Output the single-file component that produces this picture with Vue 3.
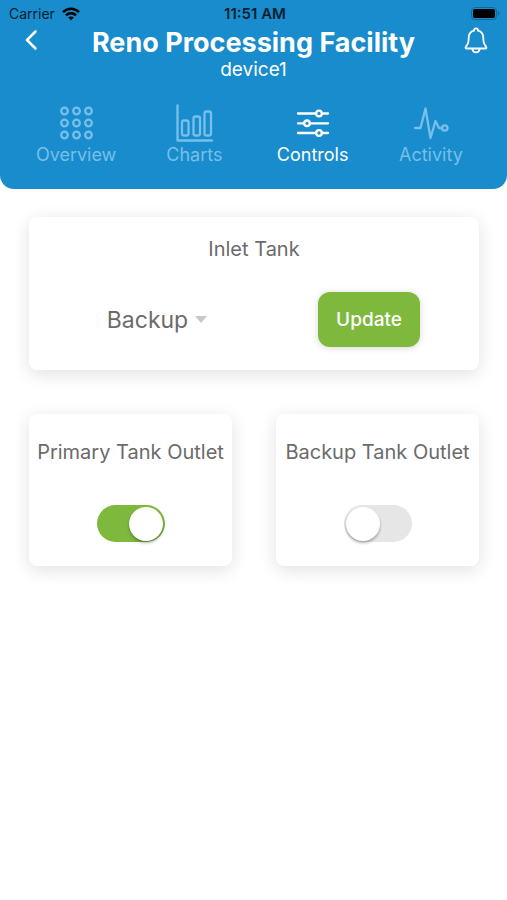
<script setup>
import { ref } from 'vue'

const tabs = [
  { id: 'overview', label: 'Overview' },
  { id: 'charts', label: 'Charts' },
  { id: 'controls', label: 'Controls' },
  { id: 'activity', label: 'Activity' },
]
const activeTab = ref('controls')

const sources = ['Primary', 'Backup']
const inlet = ref('Backup')

const outlets = ref([
  { id: 'primary-outlet', label: 'Primary Tank Outlet', open: true },
  { id: 'backup-outlet', label: 'Backup Tank Outlet', open: false },
])

const dots = [4, 16, 28]
</script>

<template>
  <div class="app">
    <header class="header">
      <div class="status">
        <span class="carrier">
          Carrier
          <svg class="wifi" viewBox="0 0 18 14" aria-hidden="true">
            <g fill="none" stroke="#000" stroke-width="2.5">
              <path d="M1 5.2C5.6 .6 12.400 .6 17 5.200" />
              <path d="M4 8.400C6.800 5.600 11.200 5.600 14 8.400" />
            </g>
            <path d="M9 13.300L6.200 10.500C7.800 9 10.200 9 11.800 10.500Z" />
          </svg>
        </span>
        <span class="clock">11:51 AM</span>
        <span class="power">
          <svg class="battery" viewBox="0 0 30 13" aria-hidden="true">
            <rect x="0.500" y="0.500" width="25" height="12" rx="3.500" fill="none" stroke="#0f6a9c" />
            <rect x="2" y="2" width="22" height="9" rx="2" />
            <path d="M27 4.500C29 5.200 29 7.800 27 8.500Z" fill="#0f6a9c" />
          </svg>
        </span>
      </div>

      <div class="titlebar">
        <button class="icon-button" type="button" aria-label="Back">
          <svg class="back" viewBox="0 0 12 20" aria-hidden="true">
            <path d="M10.500 1.500L2 10L10.500 18.500" />
          </svg>
        </button>
        <div class="titles">
          <h1>Reno Processing Facility</h1>
          <p>device1</p>
        </div>
        <button class="icon-button" type="button" aria-label="Notifications">
          <svg class="bell" viewBox="0 0 24 28" aria-hidden="true">
            <path d="M10 3.600C10 .5 14 .5 14 3.600C17.600 4.500 19.300 7.300 19.300 11C19.300 16 20 17.500 22 19.500C22.900 20.500 22.400 21.500 21.200 21.500H2.800C1.600 21.500 1.100 20.500 2 19.500C4 17.500 4.700 16 4.700 11C4.700 7.300 6.400 4.500 10 3.600Z" />
            <path d="M8.500 22C8.800 26.500 15.200 26.500 15.500 22" />
          </svg>
        </button>
      </div>

      <nav class="tabs">
        <button
          v-for="tab in tabs"
          :key="tab.id"
          type="button"
          class="tab"
          :class="{ active: tab.id === activeTab }"
          @click="activeTab = tab.id"
        >
          <svg v-if="tab.id === 'overview'" class="tab-icon" viewBox="-3 -3 38 38" aria-hidden="true">
            <template v-for="y in dots" :key="y">
              <circle v-for="x in dots" :key="x" :cx="x + 0.500" :cy="y" r="3.300" />
            </template>
          </svg>
          <svg v-else-if="tab.id === 'charts'" class="tab-icon" viewBox="0 0 38 38" aria-hidden="true">
            <path d="M2.500 1.500V36.500H37" />
            <rect x="7" y="16.500" width="6.500" height="15" rx="2" />
            <rect x="18.500" y="12.500" width="6.500" height="19" rx="2" />
            <rect x="29.500" y="7.500" width="6.500" height="24" rx="2" />
          </svg>
          <svg v-else-if="tab.id === 'controls'" class="tab-icon" viewBox="0 0 38 38" aria-hidden="true">
            <path d="M4 9.500H21.700M28.300 9.500H34M4 19.300H9.700M16.300 19.300H34M4 29H21.700M28.300 29H34" />
            <circle cx="25" cy="9.500" r="2.800" />
            <circle cx="13" cy="19.300" r="2.800" />
            <circle cx="25" cy="29" r="2.800" />
          </svg>
          <svg v-else class="tab-icon" viewBox="0 0 38 38" aria-hidden="true">
            <path d="M3 24H8.500L13.500 4.500L18.500 34L23.500 17L27 24H30" />
            <circle cx="32.800" cy="24" r="2.700" />
          </svg>
          <span>{{ tab.label }}</span>
        </button>
      </nav>
    </header>

    <main class="content">
      <form class="card inlet" @submit.prevent>
        <label class="card-title" for="inlet-source">Inlet Tank</label>
        <div class="inlet-row">
          <div class="picker">
            <select id="inlet-source" v-model="inlet">
              <option v-for="source in sources" :key="source">{{ source }}</option>
            </select>
            <svg class="caret" viewBox="0 0 12 7" aria-hidden="true">
              <path d="M0 0H12L6 7Z" />
            </svg>
          </div>
          <div class="action">
            <button class="update" type="submit">Update</button>
          </div>
        </div>
      </form>

      <div class="outlets">
        <section v-for="outlet in outlets" :key="outlet.id" class="card outlet">
          <label class="card-title" :for="outlet.id">{{ outlet.label }}</label>
          <input :id="outlet.id" v-model="outlet.open" class="switch" type="checkbox" role="switch" />
        </section>
      </div>
    </main>
  </div>
</template>

<style>
body {
  background: #fff;
}
</style>

<style scoped>
.app {
  font-family: Inter, "Liberation Sans", sans-serif;
  color: #6b6b6b;
}

button,
select {
  font: inherit;
  color: inherit;
  border: 0;
  padding: 0;
  background: none;
  cursor: pointer;
}

.header {
  background: #188ccc;
  border-radius: 0 0 14px 14px;
  padding-bottom: 23px;
}

.status {
  display: grid;
  grid-template-columns: 1fr auto 1fr;
  align-items: center;
  height: 27px;
  padding: 0 6px 0 9px;
  font-size: 14px;
  color: #06202f;
}

.carrier {
  display: flex;
  align-items: center;
  gap: 7px;
}

.wifi {
  width: 18px;
  height: 14px;
}

.clock {
  font-size: 15px;
  font-weight: 600;
}

.power {
  display: flex;
  justify-content: flex-end;
}

.battery {
  width: 30px;
  height: 13px;
}

.titlebar {
  display: flex;
  justify-content: space-between;
  align-items: flex-start;
  padding: 0 15px;
  color: #fff;
}

.icon-button {
  display: flex;
  justify-content: center;
  width: 32px;
  height: 28px;
}

.back {
  width: 12px;
  height: 20px;
  margin-top: 3px;
  fill: none;
  stroke: #fff;
  stroke-width: 2.5;
  stroke-linecap: round;
  stroke-linejoin: round;
}

.bell {
  width: 24px;
  height: 28px;
  fill: none;
  stroke: #fff;
  stroke-width: 1.8;
}

.titles {
  text-align: center;
}

h1 {
  margin: 0;
  font-size: 27px;
  font-weight: 700;
  line-height: 32px;
}

p {
  margin: 0;
  font-size: 19px;
  line-height: 22px;
}

.tabs {
  display: grid;
  grid-template-columns: repeat(4, 1fr);
  padding: 23px 17px 0;
}

.tab {
  display: flex;
  flex-direction: column;
  align-items: center;
  gap: 2px;
  font-size: 18px;
  line-height: 22px;
  color: #78bfe9;
}

.tab.active {
  color: #fff;
}

.tab-icon {
  width: 38px;
  height: 38px;
  fill: none;
  stroke: currentColor;
  stroke-width: 2.3;
  stroke-linecap: round;
  stroke-linejoin: round;
}

.content {
  display: flex;
  flex-direction: column;
  gap: 44px;
  padding: 28px 28px 28px 29px;
}

.card {
  display: flex;
  flex-direction: column;
  align-items: center;
  border-radius: 8px;
  background: #fff;
  box-shadow: 0 4px 18px rgba(0, 0, 0, 0.12);
}

.card-title {
  font-size: 20px;
  line-height: 24px;
  white-space: nowrap;
}

.inlet {
  padding: 20px 0 23px;
  gap: 31px;
}

.inlet-row {
  display: grid;
  grid-template-columns: 1fr 1fr;
  align-items: center;
  align-self: stretch;
  padding: 0 4px 0 22px;
}

.picker {
  display: flex;
  align-items: center;
  justify-content: center;
}

select {
  appearance: none;
  field-sizing: content;
  font-size: 23px;
  line-height: 28px;
  padding-right: 19px;
}

.caret {
  width: 12px;
  height: 7px;
  margin-left: -12px;
  fill: #c8c8c8;
  pointer-events: none;
}

.action {
  display: flex;
  justify-content: center;
}

.update {
  padding: 0 18px;
  height: 55px;
  border-radius: 12px;
  background: #7eb93e;
  box-shadow: 0 1px 7px rgba(0, 0, 0, 0.16);
  font-size: 19px;
  font-weight: 500;
  color: #fff;
}

.outlets {
  display: grid;
  grid-template-columns: 1fr 1fr;
  gap: 44px;
}

.outlet {
  padding: 26px 0 24px;
  gap: 41px;
}

.switch {
  appearance: none;
  display: flex;
  align-items: center;
  width: 68px;
  height: 37px;
  margin: 0;
  padding: 0 2px;
  border-radius: 19px;
  background: #e6e6e6;
  cursor: pointer;
}

.switch::before {
  content: "";
  width: 34px;
  height: 34px;
  border-radius: 50%;
  background: #fff;
  box-shadow: 0 2px 3px rgba(0, 0, 0, 0.3);
}

.switch:checked {
  justify-content: flex-end;
  background: #7eb93e;
}
</style>
